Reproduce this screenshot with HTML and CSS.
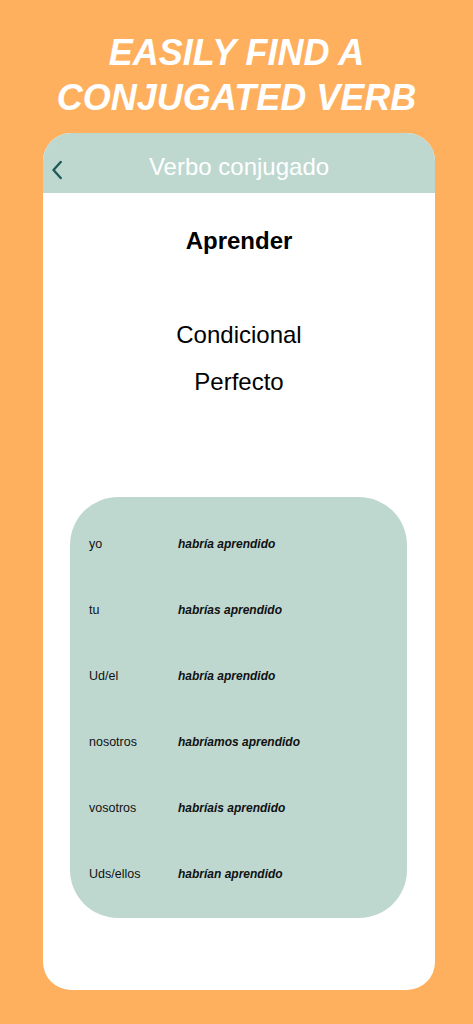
FILE: index.html
```html
<!DOCTYPE html>
<html lang="es">
<head>
<meta charset="utf-8">
<title>Verbo conjugado</title>
<link rel="stylesheet" href="styles.css">
</head>
<body>
<div class="page">
  <h1 class="headline">EASILY FIND A<br>CONJUGATED VERB</h1>
  <div class="phone">
    <div class="header">
      <span class="back">
        <svg width="12" height="22" viewBox="0 0 12 22"><path d="M8.7 3 L1.5 11 L8.7 19" fill="none" stroke="#1e5c5a" stroke-width="2.4" stroke-linecap="round" stroke-linejoin="round"/></svg>
      </span>
      <span class="title">Verbo conjugado</span>
    </div>
    <div class="content">
      <div class="verb">Aprender</div>
      <div class="tense">Condicional<br>Perfecto</div>
      <div class="table">
        <div class="row"><span class="pron">yo</span><span class="form">habría aprendido</span></div>
        <div class="row"><span class="pron">tu</span><span class="form">habrías aprendido</span></div>
        <div class="row"><span class="pron">Ud/el</span><span class="form">habría aprendido</span></div>
        <div class="row"><span class="pron">nosotros</span><span class="form">habríamos aprendido</span></div>
        <div class="row"><span class="pron">vosotros</span><span class="form">habríais aprendido</span></div>
        <div class="row"><span class="pron">Uds/ellos</span><span class="form">habrían aprendido</span></div>
      </div>
    </div>
  </div>
</div>
</body>
</html>
```

FILE: styles.css
```css
html, body {
  margin: 0;
  padding: 0;
  background: #ffb05f;
}
body {
  font-family: "Liberation Sans", Arial, sans-serif;
  width: 473px;
  height: 1024px;
  overflow: hidden;
}
.page {
  padding-top: 30px;
  display: flex;
  flex-direction: column;
  align-items: center;
}
.headline {
  margin: 0;
  color: #ffffff;
  font-size: 36px;
  line-height: 45px;
  font-weight: bold;
  font-style: italic;
  text-align: center;
}
.phone {
  margin-top: 13px;
  align-self: flex-start;
  margin-left: 43px;
  width: 392px;
  height: 857px;
  background: #ffffff;
  border-radius: 28px;
  overflow: hidden;
  display: flex;
  flex-direction: column;
}
.header {
  height: 60px;
  flex: none;
  background: #bed8d0;
  display: flex;
  align-items: center;
  justify-content: center;
  position: relative;
}
.back {
  position: absolute;
  left: 9px;
  top: 26px;
  width: 12px;
  height: 22px;
  display: block;
}
.back svg { display: block; }
.title {
  color: #ffffff;
  font-size: 24px;
  line-height: 52px;
  padding-top: 8px;
}
.content {
  display: flex;
  flex-direction: column;
  align-items: center;
}
.verb {
  margin-top: 33px;
  font-size: 24px;
  line-height: 30px;
  font-weight: bold;
  color: #000000;
}
.tense {
  margin-top: 55px;
  font-size: 24px;
  line-height: 47px;
  color: #000000;
  text-align: center;
}
.table {
  margin-top: 92px;
  align-self: flex-start;
  margin-left: 27px;
  width: 337px;
  height: 421px;
  flex: none;
  background: #bed8d0;
  border-radius: 48px;
  padding-top: 39px;
  box-sizing: border-box;
  display: flex;
  flex-direction: column;
}
.row {
  height: 66px;
  flex: none;
  display: flex;
  align-items: flex-start;
  padding-left: 19px;
  color: #111111;
}
.pron {
  width: 89px;
  font-size: 12.5px;
  line-height: 16px;
}
.form {
  font-size: 12px;
  line-height: 16px;
  font-weight: bold;
  font-style: italic;
}
```
